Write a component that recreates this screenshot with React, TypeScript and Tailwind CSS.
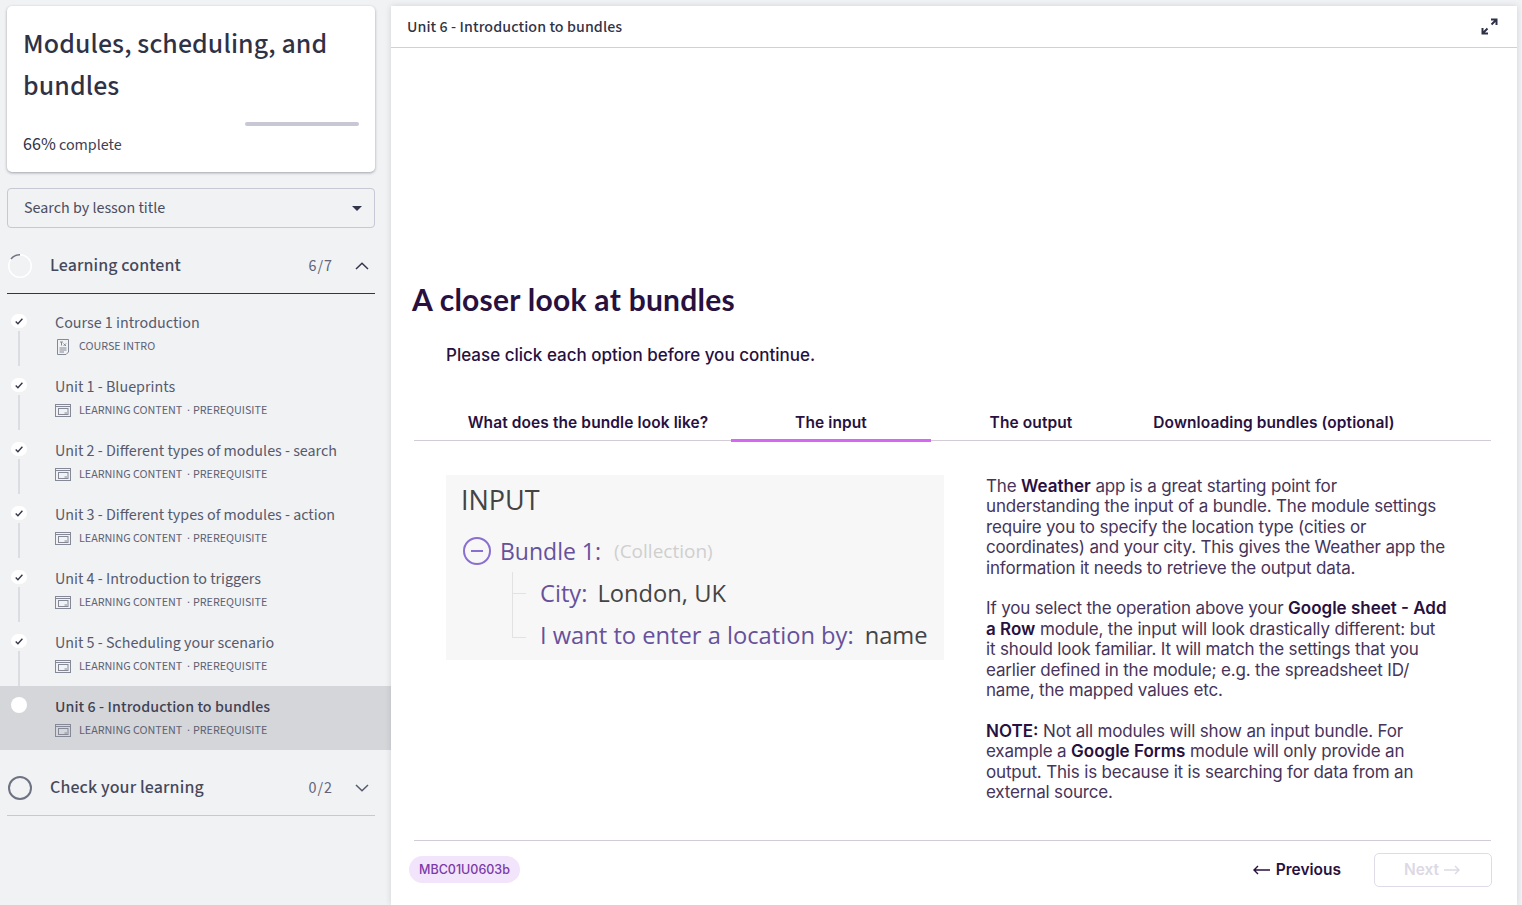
import React from "react";

const sans = "font-['Source_Sans_3','Noto_Sans',sans-serif]";

function CheckIcon() {
  return (
    <svg width="8" height="7" viewBox="0 0 8 7" fill="none">
      <path d="M0.7 3.6 L2.9 5.7 L7.4 0.8" stroke="#33364a" strokeWidth="1.4" />
    </svg>
  );
}

function ContentIcon() {
  return (
    <svg width="16" height="13" viewBox="0 0 16 13" fill="none" stroke="#858897" strokeWidth="1">
      <rect x="0.5" y="0.5" width="15" height="12" />
      <path d="M0.5 2.5 H15.5" />
      <rect x="3.5" y="4.5" width="9.5" height="6" />
      <path d="M9.5 9 H12" />
    </svg>
  );
}

function IntroIcon() {
  return (
    <svg width="14" height="16" viewBox="0 0 14 16" fill="none" stroke="#858897" strokeWidth="1">
      <path d="M1.5 0.5 H12.5 V13 L10 15.5 H1.5 Z" />
      <path d="M4 3 H7 M5.5 3 V6.5 M7.5 4.5 L10 7 M10 4.5 L7.5 7" />
      <path d="M3.5 9 H10.5 M3.5 11 H10.5 M3.5 13 H8" />
    </svg>
  );
}

const lessons = [
  { t: "Course 1 introduction", s: "COURSE INTRO", intro: true },
  { t: "Unit 1 - Blueprints", s: "LEARNING CONTENT  ·", p: "PREREQUISITE" },
  { t: "Unit 2 - Different types of modules - search", s: "LEARNING CONTENT  ·", p: "PREREQUISITE" },
  { t: "Unit 3 - Different types of modules - action", s: "LEARNING CONTENT  ·", p: "PREREQUISITE" },
  { t: "Unit 4 - Introduction to triggers", s: "LEARNING CONTENT  ·", p: "PREREQUISITE" },
  { t: "Unit 5 - Scheduling your scenario", s: "LEARNING CONTENT  ·", p: "PREREQUISITE" },
];

function Lesson({ t, s, p, intro, active }: { t: string; s: string; p?: string; intro?: boolean; active?: boolean }) {
  return (
    <div className={`flex h-[64px] ${active ? "bg-[#d5d6da]" : ""}`}>
      <div className={`flex w-[38px] shrink-0 flex-col items-center ${active ? "pt-[11px]" : "pt-[12px]"}`}>
        <div className="flex h-4 w-4 items-center justify-center rounded-full bg-white">{!active && <CheckIcon />}</div>
        {!active && <div className="mt-[3px] h-[40px] w-[2px] bg-[#dcdde2]" />}
      </div>
      <div className="ml-[17px] pt-[12px]">
        <div className={`text-[16px] leading-[19px] ${active ? "font-medium tracking-[0.1px] text-[#3e4153]" : "text-[#565a6c]"}`}>{t}</div>
        <div className="mt-[5px] flex h-[17px] items-center gap-2">
          <span className="flex w-4 justify-center">{intro ? <IntroIcon /> : <ContentIcon />}</span>
          <span className="flex whitespace-pre text-[12px] text-[#5e6274]">
            <span>{s}</span>
            {p && <span className="ml-[3px]">{p}</span>}
          </span>
        </div>
      </div>
    </div>
  );
}

function Tab({ label, active, wide }: { label: string; active?: boolean; wide?: boolean }) {
  return (
    <div className={`flex h-[36px] items-center justify-center whitespace-nowrap pt-[2px] text-[15.5px] font-semibold tracking-[0.1px] text-[#28103f] ${wide ? "w-[286px]" : "w-[200px]"} ${active ? "relative" : ""}`}>
      {label}
      {active && <div className="absolute bottom-[-2px] left-0 right-0 h-[3px] bg-[#d667f5]" />}
    </div>
  );
}

export default function App() {
  return (
    <div className={`flex h-[905px] w-[1522px] overflow-hidden bg-[#f1f2f4] ${sans}`}>
      <aside className="w-[391px] shrink-0">
        <div className="ml-[7px] mr-4 mt-[6px] h-[166px] rounded-[5px] bg-white px-4 pt-[17px] shadow-[0_1px_3px_rgba(40,40,60,0.4)]">
          <h1 className="text-[28px] font-medium leading-[42px] tracking-[0.13px] text-[#2f3246]">Modules, scheduling, and bundles</h1>
          <div className="ml-auto mt-[15px] h-1 w-[114px] rounded-sm bg-[#c7c8d4]" />
          <div className="mt-[9px] text-[16px] leading-[20px] text-[#3e4153]">
            <span className="text-[18px] text-[#2f3246]">66%</span> complete
          </div>
        </div>
        <div className="ml-[7px] mr-4 mt-4 flex h-10 items-center justify-between rounded border border-[#c7c8d4] pl-4 pr-3">
          <span className="text-[16px] text-[#4a4d60]">Search by lesson title</span>
          <span className="h-0 w-0 border-x-[5px] border-t-[5px] border-x-transparent border-t-[#33364a]" />
        </div>
        <div className="ml-[7px] mr-4 mt-[15px] flex h-[51px] items-center border-b border-[#33364a] pb-[5px]">
          <svg width="24" height="24" viewBox="0 0 24 24" fill="none" className="ml-[1px] shrink-0">
            <circle cx="12" cy="12" r="11.25" stroke="#ffffff" strokeWidth="1.5" />
            <path d="M3 5 A11.25 11.25 0 0 1 12 0.75" stroke="#6f7282" strokeWidth="1.5" />
          </svg>
          <span className="ml-[18px] text-[18px] font-medium tracking-[0.1px] text-[#454859]">Learning content</span>
          <span className="ml-auto text-[16px] tracking-[1px] text-[#60647a]">6/7</span>
          <svg width="14" height="8" viewBox="0 0 14 8" fill="none" className="ml-[22px] mr-[6px]">
            <path d="M1 7 L7 1.2 L13 7" stroke="#33364a" strokeWidth="1.5" />
          </svg>
        </div>
        <div className="mt-2">
          {lessons.map((l) => (
            <Lesson key={l.t} {...l} />
          ))}
          <Lesson t="Unit 6 - Introduction to bundles" s="LEARNING CONTENT  ·" p="PREREQUISITE" active />
        </div>
        <div className="ml-[7px] mr-4 flex h-[66px] items-center border-b border-[#c7c8d4] pt-[10px]">
          <svg width="24" height="24" viewBox="0 0 24 24" fill="none" className="ml-[1px] shrink-0">
            <circle cx="12" cy="12" r="11" stroke="#6f7282" strokeWidth="2" />
          </svg>
          <span className="ml-[18px] text-[18px] font-medium tracking-[0.12px] text-[#454859]">Check your learning</span>
          <span className="ml-auto text-[16px] tracking-[1px] text-[#60647a]">0/2</span>
          <svg width="14" height="8" viewBox="0 0 14 8" fill="none" className="ml-[22px] mr-[6px]">
            <path d="M1 1 L7 6.8 L13 1" stroke="#565a6c" strokeWidth="1.5" />
          </svg>
        </div>
      </aside>

      <main className="mt-[6px] flex h-[899px] w-[1126px] shrink-0 flex-col bg-white font-['Inter',sans-serif] shadow-[0_0_6px_rgba(40,40,60,0.15)]">
        <header className={`flex h-[42px] shrink-0 items-center justify-between border-b border-[#cfd0da] pl-4 pr-[19px] ${sans}`}>
          <span className="text-[16px] font-medium tracking-[0.1px] text-[#2f3246]">Unit 6 - Introduction to bundles</span>
          <svg width="17" height="17" viewBox="0 0 17 17" fill="none" stroke="#2f3246" strokeWidth="2">
            <path d="M10 1.5 H15.5 V7 M15.5 1.5 L10.5 6.5 M6.5 10.5 L1.5 15.5 M1.5 10 V15.5 H7" />
          </svg>
        </header>
        <div className="flex flex-1 flex-col pl-[21px] pr-[26px] pt-[233px]">
          <h2 className="font-['Lato',sans-serif] text-[30px] font-bold leading-[36px] tracking-[0.27px] text-[#28103f]">A closer look at bundles</h2>
          <p className="ml-[34px] mt-[28px] text-[17px] font-medium leading-[20px] text-[#28103f]">Please click each option before you continue.</p>
          <div className="ml-[2px] mt-[39px] flex border-b border-[#d3ccd6] pl-[31px]">
            <Tab label="What does the bundle look like?" wide />
            <Tab label="The input" active />
            <Tab label="The output" />
            <Tab label="Downloading bundles (optional)" wide />
          </div>
          <div className="ml-[34px] mt-[34px] flex h-[365px] items-start">
            <div className="h-[185px] w-[498px] shrink-0 bg-[#f7f7f7] pl-[15px] pt-[8px] font-['Open_Sans',sans-serif]">
              <div className="text-[27px] leading-[34px] text-[#444]">INPUT</div>
              <div className="mt-[19px] flex items-center">
                <svg width="28" height="28" viewBox="0 0 28 28" fill="none" className="ml-[2px] shrink-0" stroke="#8a6fd0" strokeWidth="2">
                  <circle cx="14" cy="14" r="13" />
                  <path d="M8 14 H20" />
                </svg>
                <span className="ml-[9px] text-[23px] leading-[30px] text-[#66519c]">Bundle 1:</span>
                <span className="ml-[13px] text-[19px] leading-[30px] text-[#cfcfcf]">(Collection)</span>
              </div>
              <div className="relative ml-[79px] mt-[12px] text-[23.7px] leading-[30px]">
                <div className="absolute -left-[28px] -top-[6px] h-[66px] w-px bg-[#e2e2e2]" />
                <div className="absolute -left-[28px] top-[15px] h-px w-[14px] bg-[#e2e2e2]" />
                <div className="absolute -left-[28px] top-[59px] h-px w-[14px] bg-[#e2e2e2]" />
                <div className="whitespace-nowrap">
                  <span className="text-[#66519c]">City:</span>
                  <span className="ml-[10px] text-[#444]">London, UK</span>
                </div>
                <div className="mt-[12px] whitespace-nowrap">
                  <span className="text-[#66519c]">I want to enter a location by:</span>
                  <span className="ml-[11px] text-[#444]">name</span>
                </div>
              </div>
            </div>
            <div className="ml-[42px] w-[461px] text-[17px] leading-[20.4px] tracking-[-0.17px] text-[#46345a]">
              <p className="mt-[1px]">
                The <b className="font-semibold tracking-normal text-[#28103f]">Weather</b> app is a great starting point for understanding the input of a bundle. The module settings require you to specify the location type (cities or coordinates) and your city. This gives the Weather app the information it needs to retrieve the output data.
              </p>
              <p className="mt-[20.4px]">
                If you select the operation above your <b className="font-semibold tracking-normal text-[#28103f]">Google sheet - Add a Row</b> module, the input will look drastically different: but it should look familiar. It will match the settings that you earlier defined in the module; e.g. the spreadsheet ID/ name, the mapped values etc.
              </p>
              <p className="mt-[20.4px]">
                <b className="font-semibold tracking-normal text-[#28103f]">NOTE:</b> Not all modules will show an input bundle. For example a <b className="font-semibold tracking-normal text-[#28103f]">Google Forms</b> module will only provide an output. This is because it is searching for data from an external source.
              </p>
            </div>
          </div>
          <div className="relative ml-[2px] flex h-[65px] items-start justify-between border-t border-[#d3ccd6] pt-[12px]">
            <span className="-ml-[5px] mt-[3px] flex h-[27px] w-[111px] items-center justify-center rounded-full bg-[#f2e4fb] pt-[2px] text-[12.5px] font-medium text-[#7b3aa8]">MBC01U0603b</span>
            <div className="-mr-[1px] flex items-center">
              <span className="flex items-center gap-[6px] text-[15.5px] font-semibold text-[#28103f]">
                <svg width="17" height="10" viewBox="0 0 17 10" fill="none" stroke="#28103f" strokeWidth="1.4"><path d="M17 5 H1 M5 1 L1 5 L5 9" /></svg>
                Previous
              </span>
              <span className="ml-[33px] flex h-[34px] w-[118px] items-center justify-center gap-[5px] rounded-[5px] border border-[#dfdbe9] pr-[2px] text-[15.5px] font-semibold text-[#dcd9e5]">
                Next
                <svg width="16" height="10" viewBox="0 0 16 10" fill="none" stroke="#dcd9e5" strokeWidth="1.4"><path d="M0 5 H15 M11 1 L15 5 L11 9" /></svg>
              </span>
            </div>
          </div>
        </div>
      </main>
    </div>
  );
}
